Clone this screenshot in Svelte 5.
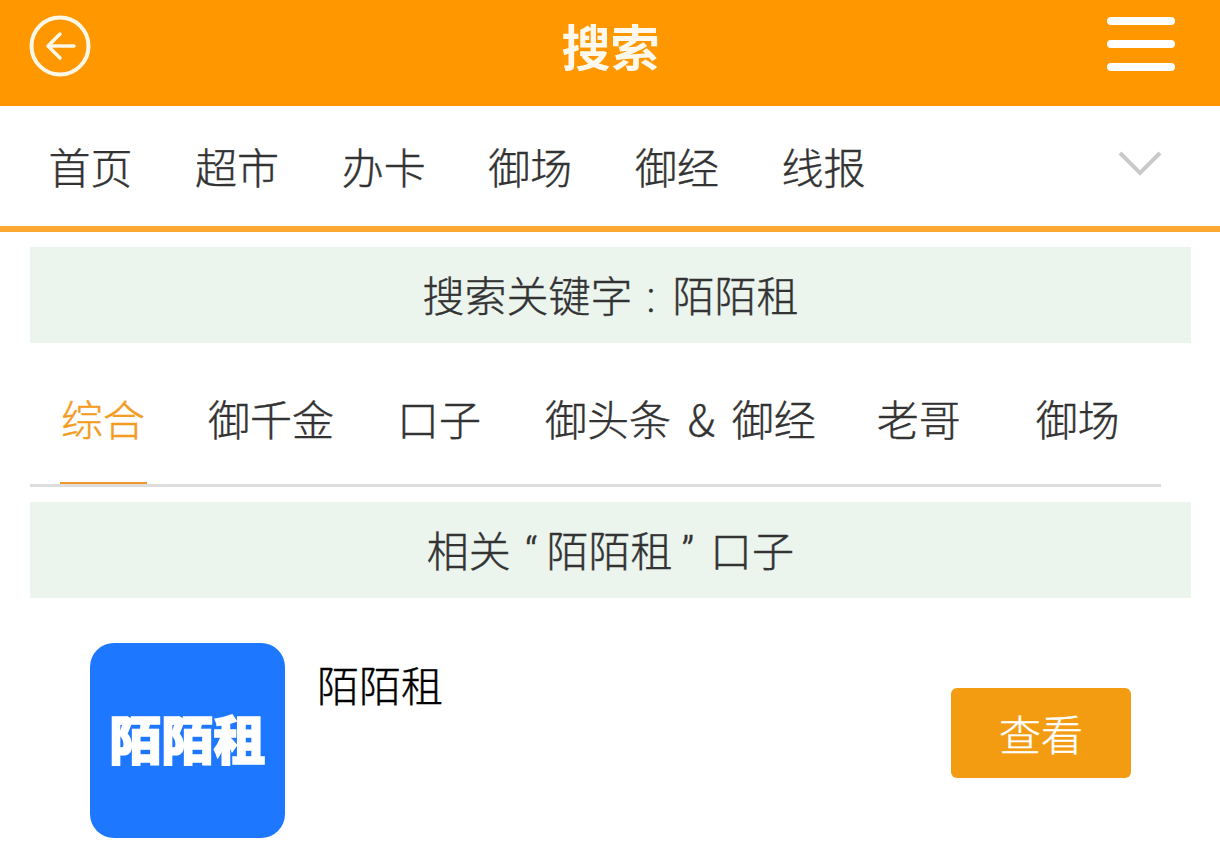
<script>
  const nav = ['首页', '超市', '办卡', '御场', '御经', '线报'];
  const tabs = [
    { label: '综合', cls: 'active' },
    { label: '御千金', cls: 'b' },
    { label: '口子', cls: 'c' },
    { label: '御头条 & 御经', cls: 'd' },
    { label: '老哥', cls: 'e' },
    { label: '御场', cls: 'f' }
  ];
</script>

<div class="page">
  <header class="top">
    <svg class="back" viewBox="0 0 64 64" width="64" height="64" aria-hidden="true">
      <circle cx="32" cy="32" r="28.5" fill="none" stroke="#fff8e8" stroke-width="4" />
      <path d="M46 32H20M32 20 20 32l12 12" fill="none" stroke="#fff8e8" stroke-width="3.5" stroke-linecap="round" stroke-linejoin="round" />
    </svg>
    <h1>搜索</h1>
    <div class="menu"><i></i><i></i><i></i></div>
  </header>

  <nav class="nav">
    <div class="links">
      {#each nav as n}<a href="#top">{n}</a>{/each}
    </div>
    <svg class="chev" viewBox="0 0 44 26" width="44" height="26" aria-hidden="true">
      <path d="M2 2 22 22 42 2" fill="none" stroke="#c9c9c9" stroke-width="4" />
    </svg>
  </nav>

  <main class="content">
    <div class="banner first"><span>搜索关键字<span class="colon">:</span>陌陌租</span></div>

    <div class="tabs">
      {#each tabs as t}<a href="#top" class="tab {t.cls}">{t.label}</a>{/each}
    </div>

    <div class="banner second"><span>相关<span class="q open">“</span>陌陌租<span class="q close">”</span>口子</span></div>

    <div class="app">
      <div class="logo">陌陌租</div>
      <div class="name">陌陌租</div>
      <button class="view">查看</button>
    </div>
  </main>
</div>

<style>
  :global(body) {
    margin: 0;
    background: #fff;
  }
  .page {
    width: 1220px;
    height: 850px;
    overflow: hidden;
    font-family: "Noto Sans CJK SC", "Noto Sans", sans-serif;
    font-size: 42px;
    font-weight: 300;
    color: #333;
    -webkit-text-stroke: 0.4px currentColor;
  }
  .top {
    height: 106px;
    background: #ff9800;
    display: grid;
    grid-template-columns: 1fr auto 1fr;
    align-items: center;
    padding: 0 45px 0 28px;
    box-sizing: border-box;
  }
  .back {
    display: block;
    margin-bottom: 15px;
  }
  h1 {
    margin: 0 0 17px;
    font-size: 49px;
    line-height: 60px;
    font-weight: 700;
    color: #fff8ec;
    position: relative;
    left: 9px;
    -webkit-text-stroke: 0;
  }
  .menu {
    width: 68px;
    justify-self: end;
    display: flex;
    flex-direction: column;
    gap: 15px;
    margin-bottom: 18px;
  }
  .menu i {
    display: block;
    height: 8px;
    border-radius: 4px;
    background: #fff;
  }
  .nav {
    height: 126px;
    box-sizing: border-box;
    border-bottom: 6px solid #ffa733;
    display: flex;
    align-items: center;
    justify-content: space-between;
    padding: 0 58px 0 48.5px;
  }
  .links {
    display: flex;
    gap: 62.6px;
  }
  .links a {
    color: #333;
    text-decoration: none;
    line-height: 60px;
  }
  .chev {
    display: block;
    margin-bottom: 4px;
  }
  .content {
    padding: 0 29px 0 30px;
  }
  .banner {
    height: 96px;
    background: #ebf5ee;
    display: flex;
    align-items: center;
    justify-content: center;
    color: #333;
    line-height: 60px;
    box-sizing: border-box;
  }
  .banner.first {
    margin-top: 15px;
    padding-top: 2px;
  }
  .banner.second {
    padding-top: 2px;
  }
  .colon {
    font-family: "Roboto", sans-serif;
    margin: 0 17px 0 14px;
  }
  .q {
    font-family: "Roboto", sans-serif;
  }
  .q.open { margin: 0 9px 0 14px; }
  .q.close { margin: 0 16px 0 9px; }
  .tabs {
    display: flex;
    width: 1131px;
    height: 144px;
    box-sizing: border-box;
    border-bottom: 3px solid #ddd;
    margin-bottom: 15px;
    padding-left: 30px;
  }
  .tab {
    height: 141px;
    box-sizing: border-box;
    padding-top: 45px;
    line-height: 60px;
    color: #333;
    text-decoration: none;
    white-space: nowrap;
  }
  .tab.active {
    color: #f39c1f;
    border-bottom: 2px solid #f0982a;
    padding: 45px 2px 0 1px;
    margin-bottom: -1px;
  }
  .tab.b { margin-left: 61px; }
  .tab.c { margin-left: 63px; }
  .tab.d { margin-left: 64px; word-spacing: 7.5px; }
  .tab.e { margin-left: 61px; }
  .tab.f { margin-left: 75px; }
  .app {
    display: flex;
    align-items: flex-start;
    padding: 45px 60px 0;
  }
  .logo {
    width: 195px;
    height: 195px;
    border-radius: 24px;
    background: #1e78ff;
    color: #fff;
    font-weight: 900;
    font-size: 52px;
    line-height: 189px;
    text-align: center;
    flex: none;
    -webkit-text-stroke: 1.5px #fff;
  }
  .name {
    margin-left: 32px;
    color: #000;
    line-height: 60px;
    margin-top: 11px;
    flex: 1;
  }
  .view {
    width: 180px;
    height: 90px;
    margin-top: 45px;
    border: 0;
    border-radius: 6px;
    background: #f39c12;
    color: #fff;
    font: inherit;
    padding: 0 0 2px;
  }
</style>
